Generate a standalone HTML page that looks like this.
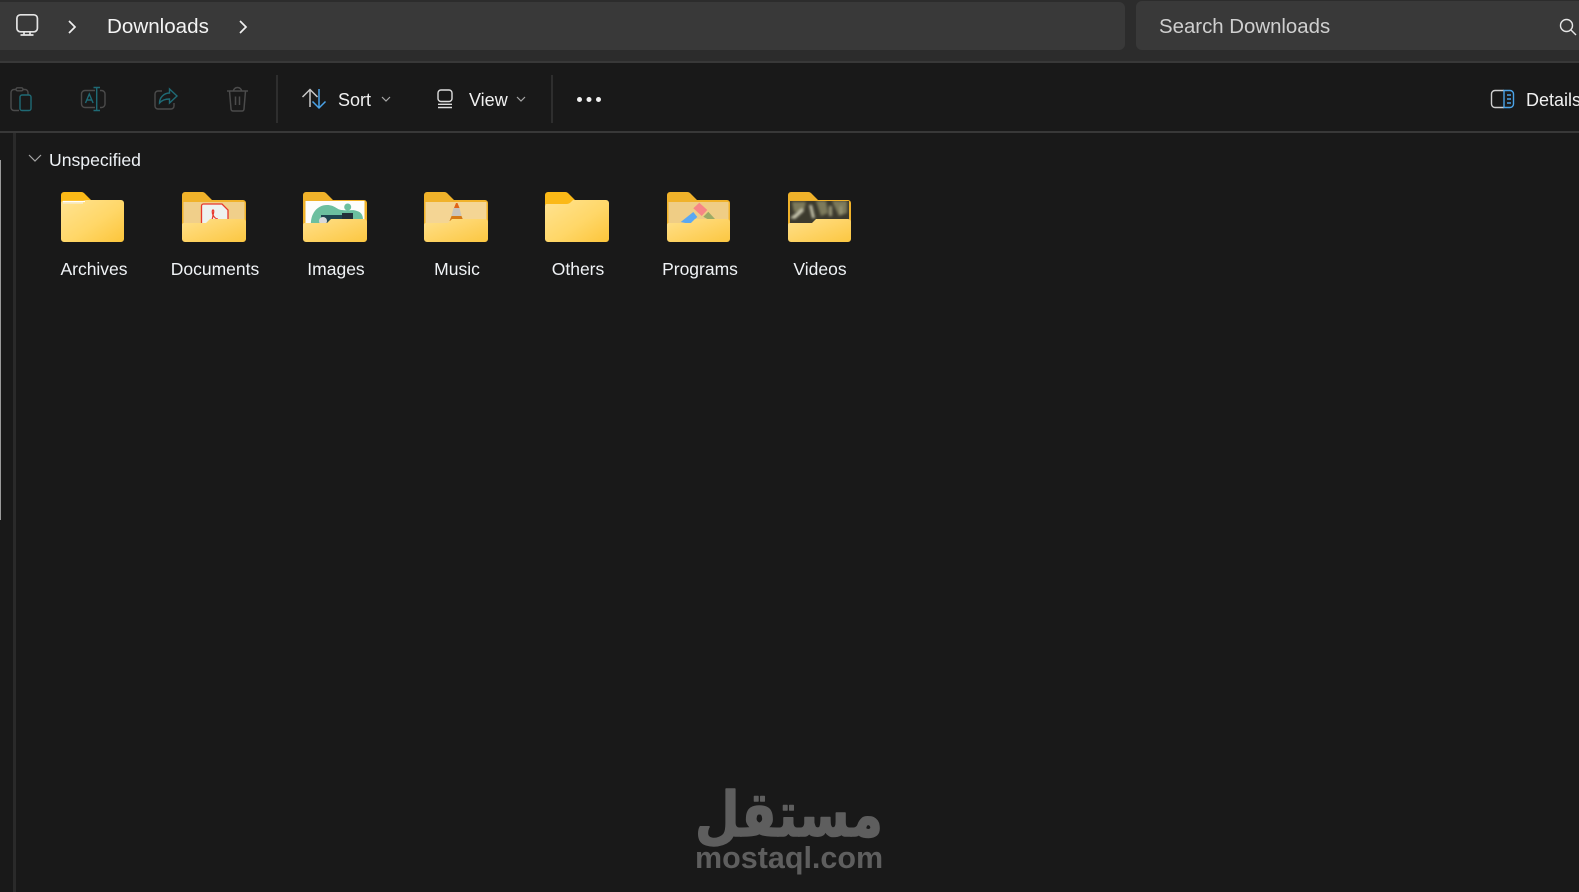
<!DOCTYPE html>
<html lang="en"><head><meta charset="utf-8"><title>Downloads</title>
<style>
html,body{margin:0;padding:0;width:1579px;height:892px;overflow:hidden;background:#191919}
body{position:relative;font-family:"Liberation Sans",sans-serif;color:#f2f2f2}
.a{position:absolute}
.t{position:absolute;white-space:nowrap;line-height:24px;height:24px}
.l{position:absolute;top:257px;width:120px;text-align:center;font-size:17.5px;line-height:24px;color:#f0f3f6;white-space:nowrap}
svg{position:absolute;overflow:visible}
</style></head><body>
<div class="a" style="left:0;top:0;width:1579px;height:61px;background:#2c2c2c"></div>
<div class="a" style="left:0;top:2px;width:1125px;height:48px;background:#393939;border-radius:0 6px 6px 0"></div>
<div class="a" style="left:1136px;top:1px;width:443px;height:49px;background:#393939;border-radius:6px 0 0 6px"></div>
<div class="a" style="left:0;top:61px;width:1579px;height:2px;background:#383838"></div>
<div class="a" style="left:0;top:131px;width:1579px;height:2px;background:#383838"></div>
<div class="a" style="left:276px;top:75px;width:2px;height:48px;background:#2e2e2e"></div>
<div class="a" style="left:551px;top:75px;width:2px;height:48px;background:#2e2e2e"></div>
<div class="a" style="left:13px;top:133px;width:3px;height:759px;background:#2a2a2a"></div>
<div class="a" style="left:0;top:160px;width:1px;height:360px;background:#9a9a9a"></div>

<svg style="left:16px;top:13px" width="24" height="24" viewBox="0 0 24 24" fill="none" stroke="#e4e4e4" stroke-width="1.700"><rect x="0.900" y="1.800" width="20.500" height="17" rx="3.500"/><path d="M8 19v3M14 19v3M4.500 22h13"/></svg>
<svg style="left:67px;top:20px" width="10" height="14" viewBox="0 0 10 14" fill="none" stroke="#f0f0f0" stroke-width="1.700"><path d="M2 1l6 6-6 6"/></svg>
<div class="t" style="left:107px;top:15px;font-size:20.600px;color:#f4f4f4">Downloads</div>
<svg style="left:238px;top:20px" width="10" height="14" viewBox="0 0 10 14" fill="none" stroke="#f0f0f0" stroke-width="1.700"><path d="M2 1l6 6-6 6"/></svg>
<div class="t" style="left:1159px;top:15px;font-size:20.400px;color:#cfcfcf">Search Downloads</div>
<svg style="left:1559px;top:18px" width="20" height="20" viewBox="0 0 20 20" fill="none" stroke="#e6e6e6" stroke-width="1.400"><circle cx="7.500" cy="7.500" r="6"/><path d="M12 12l5 5"/></svg>

<!-- disabled toolbar icons -->
<svg style="left:0;top:75px" width="270" height="50" viewBox="0 0 270 50" fill="none" stroke-width="1.400">
<g stroke="#4b4b4b"><path d="M16 14.500h-2a3 3 0 0 0-3 3v15a3 3 0 0 0 3 3h5"/><path d="M23 14.500h2a3 3 0 0 1 3 3v2.500"/><rect x="16" y="12.800" width="7" height="3" rx="1.500"/></g>
<rect x="20" y="20" width="11" height="15.500" rx="2" stroke="#1f6a75"/>
<g stroke="#4b4b4b"><path d="M95 15.500h-10a3.500 3.500 0 0 0-3.500 3.500v10a3.500 3.500 0 0 0 3.500 3.500h10"/><path d="M100 15.500h1.500a3.500 3.500 0 0 1 3.500 3.500v10a3.500 3.500 0 0 1-3.500 3.500H100"/></g>
<g stroke="#1f6a75"><path d="M96.700 12.500v23M93.500 12.500h6.500M93.500 35.500h6.500"/><path d="M85.500 28l3.800-9 3.800 9M87 25h4.700"/></g>
<path d="M162 16h-4a3 3 0 0 0-3 3v12a3 3 0 0 0 3 3h13a3 3 0 0 0 3-3v-3" stroke="#4b4b4b"/>
<path d="M159.500 28c0-5 4-10 10-10v-4l7.500 7-7.500 7v-4c-4 0-7.500 1-10 4z" stroke="#1f6a75"/>
<g stroke="#4b4b4b" stroke-width="1.500"><path d="M227 16h21M229.500 16l1.500 18a2 2 0 0 0 2 2h9a2 2 0 0 0 2-2l1.500-18"/><path d="M233.500 16a4 3.500 0 0 1 8 0M235.500 21.500v8.500M239.500 21.500v8.500"/></g>
</svg>

<!-- sort -->
<svg style="left:300px;top:87px" width="28" height="24" viewBox="0 0 28 24" fill="none" stroke-width="1.500"><path d="M10 20V3M2.500 10l7.500-7.500 7.500 7.500" stroke="#c8c8c8"/><path d="M19 2v19M12.500 14.500l6.500 6.500 6.500-6.500" stroke="#4aa3e8"/></svg>
<div class="t" style="left:338px;top:88px;font-size:18px;color:#f0f0f0">Sort</div>
<svg style="left:381px;top:96px" width="10" height="7" viewBox="0 0 10 7" fill="none" stroke="#a8a8a8" stroke-width="1.200"><path d="M1 1l4 4 4-4"/></svg>
<!-- view -->
<svg style="left:436px;top:89px" width="18" height="20" viewBox="0 0 18 20" fill="none" stroke="#dedede" stroke-width="1.400"><rect x="2" y="1" width="14" height="11.500" rx="3"/><path d="M2 15.300h14M2 18.500h14"/></svg>
<div class="t" style="left:469px;top:88px;font-size:18px;color:#f0f0f0">View</div>
<svg style="left:516px;top:96px" width="10" height="7" viewBox="0 0 10 7" fill="none" stroke="#a8a8a8" stroke-width="1.200"><path d="M1 1l4 4 4-4"/></svg>
<svg style="left:575px;top:95px" width="28" height="10" viewBox="0 0 28 10" fill="#f0f0f0"><circle cx="4.500" cy="4.500" r="2.500"/><circle cx="14" cy="4.500" r="2.500"/><circle cx="23.500" cy="4.500" r="2.500"/></svg>
<!-- details -->
<svg style="left:1490px;top:89px" width="26" height="20" viewBox="0 0 26 20" fill="none" stroke-width="1.400"><path d="M14 1.500H5a3.500 3.500 0 0 0-3.500 3.500v10a3.500 3.500 0 0 0 3.500 3.500h9" stroke="#cfcfcf"/><path d="M14 1.500h6a3.500 3.500 0 0 1 3.500 3.500v10a3.500 3.500 0 0 1-3.500 3.500h-6z" stroke="#4aa3e8"/><path d="M17 6h4M17 10h4M17 14h4" stroke="#4aa3e8"/></svg>
<div class="t" style="left:1526px;top:88px;font-size:18px;color:#f0f0f0">Details</div>

<!-- section -->
<svg style="left:28px;top:153px" width="14" height="10" viewBox="0 0 14 10" fill="none" stroke="#a6a6a6" stroke-width="1.200"><path d="M1 2l6 6 6-6"/></svg>
<div class="t" style="left:49px;top:148px;font-size:17.600px;color:#eef2f6">Unspecified</div>

<svg class="a" style="left:0;top:0;width:0;height:0"><defs>
<linearGradient id="g" x1="0" y1="0" x2="1" y2="1"><stop offset="0" stop-color="#ffe391"/><stop offset=".55" stop-color="#ffd768"/><stop offset="1" stop-color="#fcc53a"/></linearGradient>
<linearGradient id="f" x1="0" y1="0" x2="1" y2="1"><stop offset="0" stop-color="#ffe08a"/><stop offset="1" stop-color="#fcc741"/></linearGradient>
<filter id="b" x="-10%" y="-10%" width="120%" height="120%"><feGaussianBlur stdDeviation="1.300"/></filter>
<clipPath id="c"><rect x="2" y="9" width="59" height="25"/></clipPath>
</defs></svg>

<!-- Archives -->
<svg style="left:61px;top:192px" width="63" height="50" viewBox="0 0 63 50">
<path d="M0 3a3 3 0 0 1 3-3h17a4 4 0 0 1 3 1l7 7v4H0z" fill="#fbb917"/>
<path d="M0 11a2 2 0 0 1 2-2h20l3-1h35a3 3 0 0 1 3 3v36a3 3 0 0 1-3 3H3a3 3 0 0 1-3-3z" fill="url(#g)"/>
<path d="M2 9.500h22" stroke="#fff" stroke-width="1.200"/>
<path d="M2 11h20" stroke="#f3f0e4" stroke-width="1"/>
</svg>
<!-- Documents -->
<svg style="left:182px;top:192px" width="64" height="50" viewBox="0 0 64 50">
<path d="M0 3a3 3 0 0 1 3-3h17a4 4 0 0 1 3 1l7 7h31a3 3 0 0 1 3 3v26H0z" fill="#f0b22a"/>
<rect x="1.500" y="10" width="61" height="24" fill="#f0cf8a"/>
<path d="M19.500 34V14a2 2 0 0 1 2-2H40l6 6v16z" fill="#eef2f0" stroke="#e8372b" stroke-width="1.300"/>
<path d="M31 23c1-3 1-5 0-5s-1 3 0 5c1 2 3 4 5 4M29 31c1-3 2-6 2-8" fill="none" stroke="#e8372b" stroke-width="1.200"/>
<path d="M0 33a2 2 0 0 1 2-2h22l4-4h33a3 3 0 0 1 3 3v17a3 3 0 0 1-3 3H3a3 3 0 0 1-3-3z" fill="url(#f)"/>
</svg>
<!-- Images -->
<svg style="left:303px;top:192px" width="64" height="50" viewBox="0 0 64 50">
<path d="M0 3a3 3 0 0 1 3-3h17a4 4 0 0 1 3 1l7 7h31a3 3 0 0 1 3 3v26H0z" fill="#f0b22a"/>
<rect x="2.500" y="9" width="59" height="25" fill="#fdfdfb"/>
<path d="M8 34C7 22 14 13 24 13C32 13 34 18 39 18C46 19 50 17 54 19C58 20 60 23 60 28V34Z" fill="#6cbf9f"/>
<circle cx="44.700" cy="15" r="3.500" fill="#6cbf9f"/>
<rect x="18" y="23" width="32" height="11" fill="#1f4550"/><rect x="39" y="21" width="11" height="9" fill="#24313a"/>
<circle cx="20" cy="29" r="4" fill="#d8d8d8"/>
<path d="M0 33a2 2 0 0 1 2-2h22l4-4h33a3 3 0 0 1 3 3v17a3 3 0 0 1-3 3H3a3 3 0 0 1-3-3z" fill="url(#f)"/>
</svg>
<!-- Music -->
<svg style="left:424px;top:192px" width="64" height="50" viewBox="0 0 64 50">
<path d="M0 3a3 3 0 0 1 3-3h17a4 4 0 0 1 3 1l7 7h31a3 3 0 0 1 3 3v26H0z" fill="#f0b22a"/>
<rect x="1.500" y="10" width="61" height="24" fill="#f4d594"/>
<path d="M30 16l2-5h1.500l2 5z" fill="#e0651a"/>
<path d="M29.500 16h6l2 8h-10z" fill="#c9c4bb"/>
<path d="M27.500 24h10l2 5H25.500z" fill="#d67a16"/>
<path d="M0 33a2 2 0 0 1 2-2h22l4-4h33a3 3 0 0 1 3 3v17a3 3 0 0 1-3 3H3a3 3 0 0 1-3-3z" fill="url(#f)"/>
</svg>
<!-- Others -->
<svg style="left:545px;top:192px" width="64" height="50" viewBox="0 0 64 50">
<path d="M0 3a3 3 0 0 1 3-3h17a4 4 0 0 1 3 1l7 7v5H0z" fill="#fbb917"/>
<path d="M0 14a2 2 0 0 1 2-2h20a6 6 0 0 0 4-2l2-2h33a3 3 0 0 1 3 3v36a3 3 0 0 1-3 3H3a3 3 0 0 1-3-3z" fill="url(#g)"/>
</svg>
<!-- Programs -->
<svg style="left:667px;top:192px" width="63" height="50" viewBox="0 0 63 50">
<path d="M0 3a3 3 0 0 1 3-3h17a4 4 0 0 1 3 1l7 7h30a3 3 0 0 1 3 3v26H0z" fill="#f0b22a"/>
<rect x="1.500" y="10" width="60" height="24" fill="#efcd85"/>
<path d="M13.700 30l12.600-10 4 5-7.300 7z" fill="#5aa8f2"/>
<path d="M26.300 16.300l6-5.600 8 7.300-5.600 6z" fill="#f78686"/>
<path d="M36.300 24.700l5-5 6.700 7.300-4 2z" fill="#9bab66"/>
<path d="M0 33a2 2 0 0 1 2-2h22l4-4h32a3 3 0 0 1 3 3v17a3 3 0 0 1-3 3H3a3 3 0 0 1-3-3z" fill="url(#f)"/>
</svg>
<!-- Videos -->
<svg style="left:788px;top:192px" width="63" height="50" viewBox="0 0 63 50">
<path d="M0 3a3 3 0 0 1 3-3h17a4 4 0 0 1 3 1l7 7h30a3 3 0 0 1 3 3v26H0z" fill="#f0b22a"/>
<rect x="2" y="9" width="59" height="25" fill="#3c3a2e"/>
<g filter="url(#b)" clip-path="url(#c)">
<path d="M4 10h14l-2 8-10 2zM28 9h10l2 12-7 3zM44 9h15v12l-8 3z" fill="#7d7a5c"/>
<path d="M2 26l12-10 2 3-9 8zM21 13l3 0 3 13-3 0z" fill="#c4c2ab"/>
<path d="M41 14h3v10h-3zM52 14h2v8h-2z" fill="#9c9a7c"/>
</g>
<path d="M0 33a2 2 0 0 1 2-2h22l4-4h32a3 3 0 0 1 3 3v17a3 3 0 0 1-3 3H3a3 3 0 0 1-3-3z" fill="url(#f)"/>
</svg>

<div class="l" style="left:34px">Archives</div>
<div class="l" style="left:155px">Documents</div>
<div class="l" style="left:276px">Images</div>
<div class="l" style="left:397px">Music</div>
<div class="l" style="left:518px">Others</div>
<div class="l" style="left:640px">Programs</div>
<div class="l" style="left:760px">Videos</div>

<!-- watermark -->
<svg style="left:690px;top:780px" width="200" height="100" viewBox="0 0 200 100">
<text x="5" y="56" font-family="'DejaVu Sans',sans-serif" font-weight="bold" font-size="62" fill="#5e5e5e" stroke="#5e5e5e" stroke-width="1.500" stroke-linejoin="round" textLength="188" lengthAdjust="spacingAndGlyphs" direction="rtl" text-anchor="end">مستقل</text>
<text x="5" y="88" font-family="'Liberation Sans',sans-serif" font-weight="bold" font-size="30.500" fill="#5e5e5e">mostaql.com</text>
</svg>
</body></html>
